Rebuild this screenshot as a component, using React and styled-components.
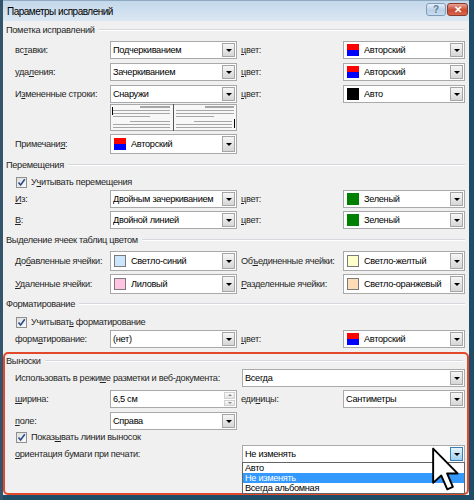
import React from 'react';
import styled, { createGlobalStyle, css } from 'styled-components';

const GlobalStyle = createGlobalStyle`
    html, body {
        margin: 0;
        padding: 0;
        background: #1d4a63;
    }
    body {
        font-family: "Liberation Sans", Arial, sans-serif;
        color: #1e1e1e;
    }
`;

// Segoe-like narrow text on top of Liberation Sans
const uiFont = css`
    font-size: 9.2px;
    letter-spacing: -0.3px;
    white-space: nowrap;
`;

const Window = styled.div`
    position: relative;
    width: 474px;
    height: 500px;
    box-sizing: border-box;
    display: flex;
    flex-direction: column;
    background: #1f4d67;
    border-left: 3px solid #34546b;
    padding: 0 5px 5px 0;
    overflow: hidden;
`;

const TitleBar = styled.div`
    height: 21px;
    flex: none;
    display: flex;
    align-items: center;
    padding-left: 4px;
    background: linear-gradient(#c3d8eb, #dbe7f3);
    border-top: 1px solid #8fa9c0;
    box-sizing: border-box;
    font-size: 10px;
    letter-spacing: -0.5px;
    color: #000;
`;

const CaptionButtons = styled.div`
    margin-left: auto;
    margin-right: 1px;
    align-self: flex-start;
    margin-top: 2px;
    display: flex;
    gap: 1px;
`;

const CaptionButton = styled.div`
    width: ${props => (props.$close ? 21 : 20)}px;
    height: 13px;
    box-sizing: border-box;
    border: 1px solid ${props => (props.$close ? '#8a3a2c' : '#7f9db9')};
    border-radius: 3px;
    background: ${props =>
        props.$close
            ? 'linear-gradient(#e8a496, #c94a33 55%, #d8664c)'
            : 'linear-gradient(#e6eff8, #b8cfe6 55%, #cadcee)'};
    display: flex;
    align-items: center;
    justify-content: center;
    font-size: 10px;
    font-weight: bold;
    line-height: 1;
    letter-spacing: 0;
    color: ${props => (props.$close ? '#fff' : '#5d7d9c')};
`;

const Body = styled.div`
    flex: 1;
    display: flex;
    flex-direction: column;
    background: #f0f0f0;
`;

const GroupHeader = styled.div`
    ${uiFont};
    display: flex;
    align-items: center;
    gap: 4px;
    height: ${props => props.$h || 14}px;
    margin-top: ${props => props.$mt ?? 3}px;
    padding: 0 4px 0 ${props => props.$inset ?? 3}px;

    &::after {
        content: '';
        flex: 1;
        border-top: 1px solid #d5d9dd;
        border-bottom: 1px solid #fff;
    }
`;

const FormRow = styled.div`
    display: grid;
    grid-template-columns: 95px 127px 106px 122px;
    align-items: center;
    height: ${props => props.$h || 18}px;
    margin-top: ${props => props.$mt ?? 4}px;
    padding-left: ${props => props.$pl ?? 12}px;
`;

const Label = styled.span`
    ${uiFont};
    color: #262626;
    padding-left: ${props => props.$pl || 0}px;
    grid-column: ${props => props.$span || 'auto'};
`;

const Select = styled.div`
    ${uiFont};
    position: relative;
    display: flex;
    align-items: center;
    height: 100%;
    box-sizing: border-box;
    border: 1px solid #a9a9a9;
    background: #fff;
    color: #000;
    padding-left: ${props => (props.$swatch ? 3 : 2)}px;
    grid-column: ${props => props.$span || 'auto'};
    margin-left: ${props => props.$ml || 0}px;
`;

const SelectText = styled.span`
    flex: 1;
    overflow: hidden;
`;

const DropButton = styled.div`
    width: 13px;
    flex: none;
    align-self: stretch;
    margin: 1px;
    box-sizing: border-box;
    border: 1px solid ${props => (props.$active ? '#3c7fb1' : '#a5a5a5')};
    background: ${props =>
        props.$active
            ? 'linear-gradient(#e5f4fc, #9fd0ef)'
            : 'linear-gradient(#f6f6f6, #d6d6d6)'};
    display: flex;
    align-items: center;
    justify-content: center;

    &::after {
        content: '';
        border-left: 3px solid transparent;
        border-right: 3px solid transparent;
        border-top: 3px solid #000;
    }
`;

const Swatch = styled.span`
    width: 12px;
    height: 12px;
    flex: none;
    margin-right: 5px;
    box-sizing: border-box;
    background: ${props => props.$color};
    border: ${props => (props.$light ? '1px solid #7a7a7a' : 'none')};
`;

const SpinButtons = styled.div`
    width: 11px;
    flex: none;
    align-self: stretch;
    margin: 1px;
    display: flex;
    flex-direction: column;
    gap: 1px;
`;

const SpinHalf = styled.div`
    flex: 1;
    background: linear-gradient(#fafafa, #e4e4e4);
    border: 1px solid #d0d0d0;
    display: flex;
    align-items: center;
    justify-content: center;

    &::after {
        content: '';
        border-left: 2px solid transparent;
        border-right: 2px solid transparent;
        ${props =>
            props.$down
                ? 'border-top: 2px solid #8a8a8a;'
                : 'border-bottom: 2px solid #8a8a8a;'}
    }
`;

const CheckRow = styled.div`
    ${uiFont};
    display: flex;
    align-items: center;
    gap: 4px;
    height: ${props => props.$h || 14}px;
    margin-top: ${props => props.$mt ?? 4}px;
    padding-left: ${props => props.$pl ?? 13}px;
`;

const Box = styled.span`
    width: 11px;
    height: 11px;
    box-sizing: border-box;
    border: 1px solid #8e8f8f;
    background: linear-gradient(135deg, #dedede, #fbfbfb);
    display: flex;
    align-items: center;
    justify-content: center;
`;

const Preview = styled.svg`
    grid-column: 2;
    display: block;
`;

const Callouts = styled.div`
    flex: 1;
    margin-top: 4px;
    border: 2px solid #e4482c;
    border-radius: 5px;
    display: flex;
    flex-direction: column;
`;

const DropList = styled.div`
    position: absolute;
    top: 100%;
    left: -1px;
    right: -1px;
    background: #fff;
    border: 1px solid #646464;
    z-index: 2;
`;

const DropItem = styled.div`
    ${uiFont};
    height: 10px;
    line-height: 10px;
    padding-left: 2px;
    background: ${props => (props.$selected ? '#3399ff' : 'transparent')};
    color: ${props => (props.$selected ? '#fff' : '#000')};
`;

const Cursor = styled.svg`
    position: absolute;
    left: 428px;
    top: 446px;
    z-index: 3;
    pointer-events: none;
`;

const AUTHOR = 'linear-gradient(#ff0000 50%, #0000ff 50%)';

const Check = ({ checked = true }) => (
    <Box>
        {checked && (
            <svg width="9" height="9" viewBox="0 0 9 9">
                <path
                    d="M1.5 4.5 L3.6 7 L7.8 1.2"
                    fill="none"
                    stroke="#2b4d8c"
                    strokeWidth="1.6"
                />
            </svg>
        )}
    </Box>
);

const Dropdown = ({ text, color, light, span, ml, active, children }) => (
    <Select $swatch={!!color} $span={span} $ml={ml}>
        {color && <Swatch $color={color} $light={light} />}
        <SelectText>{text}</SelectText>
        <DropButton $active={active} />
        {children}
    </Select>
);

const LinesPreview = () => (
    <Preview width="127" height="27" viewBox="0 0 127 27">
        <rect x="0.5" y="0.5" width="126" height="26" fill="#f7f7f7" stroke="#a8a8a8" />
        <g stroke="#a6a6a6" strokeWidth="1">
            <line x1="30" y1="3" x2="60" y2="3" strokeWidth="2" />
            <line x1="3" y1="6.5" x2="60" y2="6.5" />
            <line x1="3" y1="9.5" x2="60" y2="9.5" />
            <line x1="3" y1="12.5" x2="40" y2="12.5" />
            <line x1="20" y1="17.5" x2="60" y2="17.5" />
            <line x1="3" y1="20.5" x2="60" y2="20.5" />
            <line x1="3" y1="23.5" x2="60" y2="23.5" />
            <line x1="95" y1="3" x2="124" y2="3" strokeWidth="2" />
            <line x1="66" y1="6.5" x2="124" y2="6.5" />
            <line x1="66" y1="9.5" x2="124" y2="9.5" />
            <line x1="66" y1="12.5" x2="104" y2="12.5" />
            <line x1="84" y1="17.5" x2="122" y2="17.5" />
            <line x1="66" y1="20.5" x2="122" y2="20.5" />
            <line x1="66" y1="23.5" x2="122" y2="23.5" />
        </g>
        <line x1="63.5" y1="0" x2="63.5" y2="27" stroke="#555" />
        <line x1="2.5" y1="3" x2="2.5" y2="11" stroke="#000" />
        <line x1="124.5" y1="15" x2="124.5" y2="24" stroke="#000" />
    </Preview>
);

const App = () => (
    <>
        <GlobalStyle />
        <Window>
            <TitleBar>
                Параметры исправлений
                <CaptionButtons>
                    <CaptionButton>?</CaptionButton>
                    <CaptionButton $close>✕</CaptionButton>
                </CaptionButtons>
            </TitleBar>
            <Body>
                <GroupHeader $mt={2}>Пометка исправлений</GroupHeader>
                <FormRow $mt={4}>
                    <Label>
                        вс<u>т</u>авки:
                    </Label>
                    <Dropdown text="Подчеркиванием" />
                    <Label $pl={4}>
                        <u>ц</u>вет:
                    </Label>
                    <Dropdown text="Авторский" color={AUTHOR} />
                </FormRow>
                <FormRow>
                    <Label>
                        уда<u>л</u>ения:
                    </Label>
                    <Dropdown text="Зачеркиванием" />
                    <Label $pl={4}>
                        <u>ц</u>вет:
                    </Label>
                    <Dropdown text="Авторский" color={AUTHOR} />
                </FormRow>
                <FormRow>
                    <Label>
                        И<u>з</u>мененные строки:
                    </Label>
                    <Dropdown text="Снаружи" />
                    <Label $pl={4}>
                        <u>ц</u>вет:
                    </Label>
                    <Dropdown text="Авто" color="#000" />
                </FormRow>
                <FormRow $mt={1} $h={27}>
                    <LinesPreview />
                </FormRow>
                <FormRow $mt={3} $h={20}>
                    <Label>
                        Примечани<u>я</u>:
                    </Label>
                    <Dropdown text="Авторский" color={AUTHOR} />
                </FormRow>

                <GroupHeader $mt={4}>Перемещения</GroupHeader>
                <CheckRow $mt={3}>
                    <Check />
                    <span>
                        У<u>ч</u>итывать перемещения
                    </span>
                </CheckRow>
                <FormRow $mt={1}>
                    <Label>
                        <u>И</u>з:
                    </Label>
                    <Dropdown text="Двойным зачеркиванием" />
                    <Label $pl={4}>
                        <u>ц</u>вет:
                    </Label>
                    <Dropdown text="Зеленый" color="#008000" />
                </FormRow>
                <FormRow $mt={3}>
                    <Label>
                        <u>В</u>:
                    </Label>
                    <Dropdown text="Двойной линией" />
                    <Label $pl={4}>
                        <u>ц</u>вет:
                    </Label>
                    <Dropdown text="Зеленый" color="#008000" />
                </FormRow>

                <GroupHeader $mt={4}>Выделение ячеек таблиц цветом</GroupHeader>
                <FormRow $mt={4} $h={20}>
                    <Label>
                        До<u>б</u>авленные ячейки:
                    </Label>
                    <Dropdown text="Светло-синий" color="#cce6ff" light />
                    <Label $pl={4}>
                        Об<u>ъ</u>единенные ячейки:
                    </Label>
                    <Dropdown text="Светло-желтый" color="#ffffcc" light />
                </FormRow>
                <FormRow $mt={3} $h={20}>
                    <Label>
                        <u>У</u>даленные ячейки:
                    </Label>
                    <Dropdown text="Лиловый" color="#ffc4e1" light />
                    <Label $pl={4}>
                        <u>Р</u>азделенные ячейки:
                    </Label>
                    <Dropdown text="Светло-оранжевый" color="#ffdcb8" light />
                </FormRow>

                <GroupHeader $mt={3}>Форматирование</GroupHeader>
                <CheckRow $mt={4}>
                    <Check />
                    <span>
                        Учитыват<u>ь</u> форматирование
                    </span>
                </CheckRow>
                <FormRow $mt={1}>
                    <Label>
                        форм<u>а</u>тирование:
                    </Label>
                    <Dropdown text="(нет)" />
                    <Label $pl={4}>
                        <u>ц</u>вет:
                    </Label>
                    <Dropdown text="Авторский" color={AUTHOR} />
                </FormRow>

                <Callouts>
                    <GroupHeader $mt={0} $h={13} $inset={1}>
                        Выноски
                    </GroupHeader>
                    <FormRow $mt={2} $pl={10}>
                        <Label $span="1 / 3">
                            Использовать в режи<u>м</u>е разметки и веб-документа:
                        </Label>
                        <Dropdown text="Всегда" span="3 / 5" ml={5} />
                    </FormRow>
                    <FormRow $mt={3} $pl={10}>
                        <Label>
                            <u>ш</u>ирина:
                        </Label>
                        <Select>
                            <SelectText>6,5 см</SelectText>
                            <SpinButtons>
                                <SpinHalf />
                                <SpinHalf $down />
                            </SpinButtons>
                        </Select>
                        <Label $pl={4}>
                            еди<u>н</u>ицы:
                        </Label>
                        <Dropdown text="Сантиметры" />
                    </FormRow>
                    <FormRow $mt={4} $pl={10}>
                        <Label>
                            <u>п</u>оле:
                        </Label>
                        <Dropdown text="Справа" />
                    </FormRow>
                    <CheckRow $mt={1} $h={12} $pl={11}>
                        <Check />
                        <span>
                            Показ<u>ы</u>вать линии выносок
                        </span>
                    </CheckRow>
                    <FormRow $mt={2} $pl={10}>
                        <Label $span="1 / 3">
                            <u>о</u>риентация бумаги при печати:
                        </Label>
                        <Dropdown text="Не изменять" span="3 / 5" ml={5} active>
                            <DropList>
                                <DropItem>Авто</DropItem>
                                <DropItem $selected>Не изменять</DropItem>
                                <DropItem>Всегда альбомная</DropItem>
                            </DropList>
                        </Dropdown>
                    </FormRow>
                </Callouts>
            </Body>
            <Cursor width="30" height="48" viewBox="-1 -1 14 22">
                <polygon
                    points="0,0 0,16 3.8,12.6 6.6,19 9.2,17.9 6.5,11.6 11.4,11.6"
                    fill="#fff"
                    stroke="#000"
                    strokeWidth="0.9"
                    strokeLinejoin="round"
                />
            </Cursor>
        </Window>
    </>
);

export default App;
